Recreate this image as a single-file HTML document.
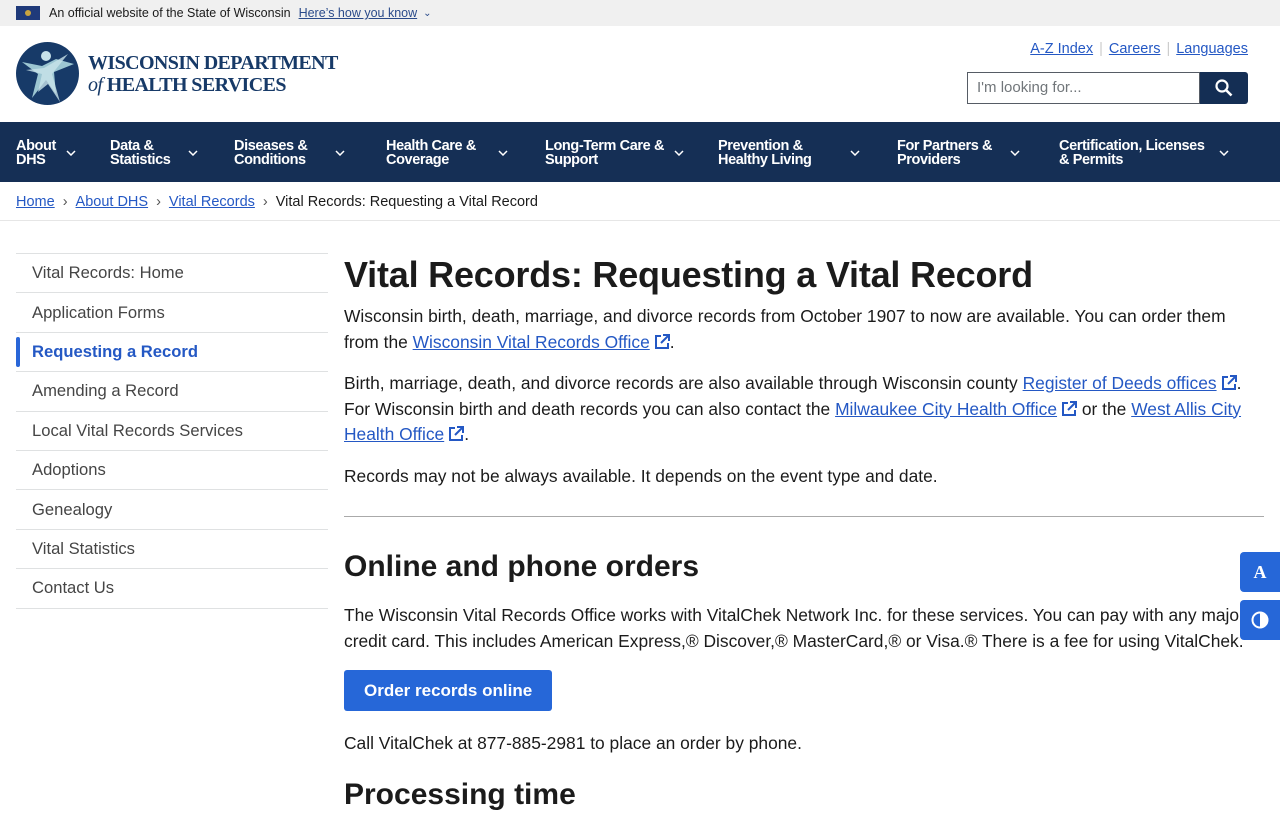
<!DOCTYPE html>
<html><head><meta charset="utf-8"><style>
*{box-sizing:border-box;margin:0;padding:0}
body{width:1280px;height:800px;overflow:hidden;font-family:"Liberation Sans",Arial,sans-serif;color:#1b1b1b;background:#fff;position:relative}
a{color:#2458c4;text-decoration:underline}
.gov{height:26px;background:#f0f0f0;font-size:12.5px;display:flex;align-items:center;padding-left:16px;color:#1b1b1b}
.gov .flag{width:24px;height:14px;background:#1f3a7a;margin-right:9px;position:relative}
.gov .flag:after{content:"";position:absolute;left:9px;top:4px;width:6px;height:6px;background:#c9a440;border-radius:50%}
.gov a{color:#2a4a8a;margin-left:8px}
.hdr{height:96px;position:relative}
.logo{position:absolute;left:16px;top:16px;display:flex;align-items:center}
.logo .t{font-family:"Liberation Serif",serif;font-weight:bold;color:#173a68;font-size:20px;line-height:22px;margin-left:9px;letter-spacing:-.6px}
.util{position:absolute;right:32px;top:15px;font-size:14.5px;color:#ccc}
.util a{margin:0 6px;color:#2458c4}
.search{position:absolute;left:967px;top:46px;width:281px;height:32px;display:flex}
.search .in{flex:1;border:1px solid #565c65;font-size:15px;color:#71767a;padding:6px 9px}
.search .b{width:48px;background:#142e54;border-radius:0 3px 3px 0;display:flex;align-items:center;justify-content:center}
nav{height:60px;background:#152f55;display:flex;padding-left:16px;color:#fff;font-weight:bold;font-size:14.5px;line-height:14px;align-items:center;padding-top:2px}
nav .i{display:flex;align-items:center;letter-spacing:-.4px}
nav svg{margin-left:10px}
.bc{height:39px;border-bottom:1px solid #e6e6e6;padding-left:16px;font-size:14.5px;display:flex;align-items:center;padding-top:2px}
.bc span{margin:0 8px;color:#555}
.side{position:absolute;left:16px;top:253px;width:312px;border-top:1px solid #dfe1e2}
.side div{height:39.4px;border-bottom:1px solid #dfe1e2;font-size:16.6px;color:#454545;padding-left:16px;display:flex;align-items:center}
.side .a{color:#2458c4;font-weight:bold;position:relative}
.side .a:before{content:"";position:absolute;left:0;top:4px;bottom:4px;width:4px;background:#2966d8;border-radius:2px}
.main{position:absolute;left:344px;top:252px;width:920px;font-size:17.4px;line-height:25.5px}
h1{font-size:36px;line-height:46px;font-weight:bold;margin-bottom:6px;letter-spacing:-.2px}
h2{font-size:30px;line-height:40px;font-weight:bold;margin:30px 0 16px}
p{margin-bottom:16px}
hr{border:0;border-top:1px solid #aaa;margin:27px 0 0}
.ext{display:inline-block;vertical-align:-2px;margin-left:4px}
.btn{display:inline-block;background:#2667d8;color:#fff;font-weight:bold;padding:0 20px;height:41px;line-height:41px;border-radius:3px;margin:0 0 20px;font-size:17px}
.fl{position:absolute;right:0;width:40px;height:40px;background:#2667d8;border-radius:4px 0 0 4px;color:#fff;display:flex;align-items:center;justify-content:center;font-weight:bold;font-size:18px;font-family:"Liberation Serif",serif}
</style></head><body>
<svg width="0" height="0" style="position:absolute"><defs><symbol id="ex" viewBox="0 0 16 16"><path d="M7 2H2v12h12V9" stroke="#2458c4" stroke-width="2" fill="none"/><path d="M9 1h6v6M15 1L7 9" stroke="#2458c4" stroke-width="2" fill="none"/></symbol><symbol id="cv" viewBox="0 0 10 6"><path d="M1 1l4 4 4-4" stroke="#fff" stroke-width="1.5" fill="none"/></symbol></defs></svg>
<div class="gov"><div class="flag"></div>An official website of the State of Wisconsin <a>Here’s how you know</a><span style="color:#2a4a8a;margin-left:6px;font-size:10px">⌄</span></div>
<div class="hdr">
<div class="logo"><svg width="63" height="63" viewBox="0 0 63 63"><circle cx="31.5" cy="31.5" r="31.5" fill="#173a68"/><circle cx="30" cy="14" r="5" fill="#c7e2ea"/><path d="M6 20 L26 24 L40 17 L58 22 L38 30 L40 52 L30 38 L16 56 L22 32 Z" fill="#9cc6d2"/><path d="M10 28 L28 26 L52 12 L36 32 L44 60 L32 42 L22 50 L26 32Z" fill="#c9e3ea" opacity=".8"/></svg><div class="t">WISCONSIN DEPARTMENT<br><i style="font-weight:normal">of</i> HEALTH SERVICES</div></div>
<div class="util"><a>A-Z Index</a>|<a>Careers</a>|<a style="margin-right:0">Languages</a></div>
<div class="search"><div class="in">I'm looking for...</div><div class="b"><svg width="18" height="18" viewBox="0 0 18 18"><circle cx="7" cy="7" r="5.5" stroke="#fff" stroke-width="2.2" fill="none"/><path d="M11 11 L16.5 16.5" stroke="#fff" stroke-width="2.6"/></svg></div></div>
</div>
<nav>
<div class="i" style="width:94px">About<br>DHS<svg width="10" height="6"><use href="#cv"/></svg></div>
<div class="i" style="width:124px">Data &amp;<br>Statistics<svg width="10" height="6" style="margin-left:18px"><use href="#cv"/></svg></div>
<div class="i" style="width:152px">Diseases &amp;<br>Conditions<svg width="10" height="6" style="margin-left:28px"><use href="#cv"/></svg></div>
<div class="i" style="width:159px">Health Care &amp;<br>Coverage<svg width="10" height="6" style="margin-left:22px"><use href="#cv"/></svg></div>
<div class="i" style="width:173px">Long-Term Care &amp;<br>Support<svg width="10" height="6" style="margin-left:10px"><use href="#cv"/></svg></div>
<div class="i" style="width:179px">Prevention &amp;<br>Healthy Living<svg width="10" height="6" style="margin-left:38px"><use href="#cv"/></svg></div>
<div class="i" style="width:162px">For Partners &amp;<br>Providers<svg width="10" height="6" style="margin-left:18px"><use href="#cv"/></svg></div>
<div class="i">Certification, Licenses<br>&amp; Permits<svg width="10" height="6" style="margin-left:14px"><use href="#cv"/></svg></div>
</nav>
<div class="bc"><a>Home</a><span>›</span><a>About DHS</a><span>›</span><a>Vital Records</a><span>›</span>Vital Records: Requesting a Vital Record</div>
<div class="side"><div>Vital Records: Home</div><div>Application Forms</div><div class="a">Requesting a Record</div><div>Amending a Record</div><div>Local Vital Records Services</div><div>Adoptions</div><div>Genealogy</div><div>Vital Statistics</div><div>Contact Us</div></div>
<div class="main">
<h1>Vital Records: Requesting a Vital Record</h1>
<p>Wisconsin birth, death, marriage, and divorce records from October 1907 to now are available. You can order them from the <a>Wisconsin Vital Records Office</a><svg class="ext" width="16" height="16"><use href="#ex"/></svg>.</p>
<p>Birth, marriage, death, and divorce records are also available through Wisconsin county <a>Register of Deeds offices</a><svg class="ext" width="16" height="16"><use href="#ex"/></svg>. For Wisconsin birth and death records you can also contact the <a>Milwaukee City Health Office</a><svg class="ext" width="16" height="16"><use href="#ex"/></svg> or the <a>West Allis City Health Office</a><svg class="ext" width="16" height="16"><use href="#ex"/></svg>.</p>
<p>Records may not be always available. It depends on the event type and date.</p>
<hr>
<h2>Online and phone orders</h2>
<p>The Wisconsin Vital Records Office works with VitalChek Network Inc. for these services. You can pay with any major credit card. This includes American Express,® Discover,® MasterCard,® or Visa.® There is a fee for using VitalChek.</p>
<div class="btn">Order records online</div>
<p>Call VitalChek at 877-885-2981 to place an order by phone.</p>
<h2 style="margin-top:18px">Processing time</h2>
</div>
<div class="fl" style="top:552px">A</div>
<div class="fl" style="top:600px"><svg width="18" height="18" viewBox="0 0 18 18"><circle cx="9" cy="9" r="7.5" stroke="#fff" stroke-width="2" fill="none"/><path d="M9 2 A7 7 0 0 1 9 16Z" fill="#fff"/></svg></div>
</body></html>
